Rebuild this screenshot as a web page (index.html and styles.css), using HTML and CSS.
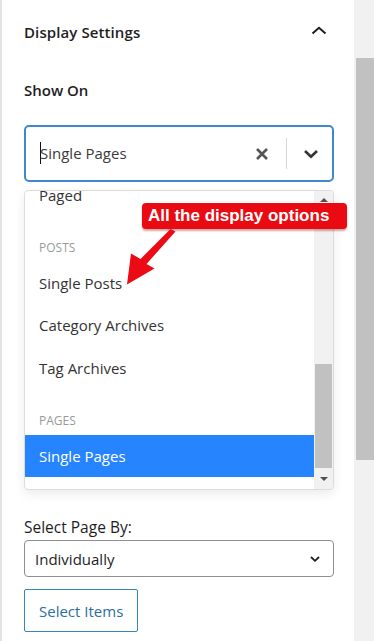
FILE: index.html
```html
<!DOCTYPE html>
<html lang="en">
<head>
<meta charset="utf-8">
<title>Display Settings</title>
<link rel="stylesheet" href="styles.css">
</head>
<body>
<div class="page">
  <div class="panel">
    <div class="panel-header">
      <span class="panel-title">Display Settings</span>
      <svg class="chev-up" width="16" height="9" viewBox="0 0 16 9"><path d="M1.5 7.5 L8 1.8 L14.5 7.5" fill="none" stroke="#1e1e1e" stroke-width="2"/></svg>
    </div>
    <div class="field-label">Show On</div>
    <div class="rs-control">
      <div class="rs-value"><span class="caret"></span>Single Pages</div>
      <div class="rs-indicators">
        <svg class="rs-clear" width="14" height="14" viewBox="0 0 14 14"><path d="M2 2 L12 12 M12 2 L2 12" stroke="#555" stroke-width="2.6" stroke-linecap="butt"/></svg>
        <span class="rs-sep"></span>
        <svg class="rs-drop" width="16" height="10" viewBox="0 0 16 10"><path d="M2 2 L8 7.6 L14 2" fill="none" stroke="#333" stroke-width="2.6"/></svg>
      </div>
    </div>
    <div class="rs-menu">
      <div class="rs-list">
        <div class="rs-scroll">
          <div class="rs-group">
            <div class="rs-option">Paged</div>
          </div>
          <div class="rs-group">
            <div class="rs-heading">Posts</div>
            <div class="rs-option">Single Posts</div>
            <div class="rs-option">Category Archives</div>
            <div class="rs-option">Tag Archives</div>
          </div>
          <div class="rs-group">
            <div class="rs-heading">Pages</div>
            <div class="rs-option selected">Single Pages</div>
          </div>
        </div>
      </div>
      <div class="mini-scrollbar">
        <span class="arrow-up"></span>
        <div class="mini-track"><div class="mini-thumb"></div></div>
        <span class="arrow-down"></span>
      </div>
    </div>
    <div class="field-label plain">Select Page By:</div>
    <div class="select-box">
      <span>Individually</span>
      <svg width="12" height="8" viewBox="0 0 12 8"><path d="M2 2 L6 5.8 L10 2" fill="none" stroke="#1e1e1e" stroke-width="1.8"/></svg>
    </div>
    <button class="btn-outline">Select Items</button>
  </div>
  <div class="page-scrollbar"><div class="page-thumb"></div></div>

  <div class="callout">All the display options</div>
  <svg class="callout-arrow" width="60" height="70" viewBox="120 225 60 70">
    <polygon points="170.5,229 175.5,231.5 146.5,264 154.5,268.5 127,284.5 131,253.5 140.5,259" fill="#ec0a14"/>
  </svg>
</div>
</body>
</html>
```
FILE: styles.css
```css
* { box-sizing: border-box; }
html, body { margin: 0; padding: 0; }
body {
  font-family: "Open Sans", "Noto Sans", sans-serif;
  color: #1e1e1e;
  background: #fff;
}
.page {
  position: relative;
  display: flex;
  width: 374px;
  height: 641px;
  overflow: hidden;
}
.panel {
  flex: 1;
  border-left: 2px solid #e4e4e4;
  padding: 0 20px 0 22px;
  background: #fff;
}
.panel-header {
  height: 64px;
  display: flex;
  align-items: center;
  justify-content: space-between;
  padding-right: 7px;
}
.panel-title {
  font-size: 15px;
  font-weight: 600;
  letter-spacing: 0.1px;
}
.chev-up { margin-top: -3px; }
.field-label {
  font-size: 15px;
  font-weight: 600;
  line-height: 20px;
  margin-top: 16px;
}
.field-label.plain {
  font-weight: 400;
  font-size: 15.5px;
  margin-top: 27px;
}
.rs-control {
  margin-top: 25px;
  height: 57px;
  border: 2px solid #3e88cf;
  border-radius: 5px;
  display: flex;
  align-items: center;
  justify-content: space-between;
}
.rs-value {
  position: relative;
  padding-left: 14px;
  font-size: 15px;
  color: #3b3b3b;
}
.caret {
  display: inline-block;
  width: 1px;
  height: 22px;
  background: #111;
  vertical-align: middle;
  margin-right: -1px;
  margin-top: -3px;
}
.rs-indicators {
  display: flex;
  align-items: center;
  height: 100%;
}
.rs-clear { margin-right: 17px; }
.rs-sep {
  width: 1px;
  height: 31px;
  background: #d6d6d6;
  margin-right: 16px;
}
.rs-drop { margin-right: 13px; }

.rs-menu {
  margin-top: 8px;
  height: 300px;
  border: 1px solid #dcdcdc;
  border-radius: 4px;
  box-shadow: 0 4px 11px rgba(0,0,0,0.08);
  display: flex;
  overflow: hidden;
  background: #fff;
}
.rs-list {
  flex: 1;
  overflow: hidden;
}
.rs-scroll { margin-top: -17.5px; padding-bottom: 4px; }
.rs-group { padding: 8px 0; }
.rs-group:first-child { padding-top: 0; }
.rs-heading {
  padding: 7px 14px 0;
  line-height: 17px;
  margin-bottom: 5.5px;
  font-size: 12px;
  color: #999;
  text-transform: uppercase;
}
.rs-option {
  height: 42.5px;
  display: flex;
  align-items: center;
  padding-left: 14px;
  font-size: 15px;
  color: #333;
}
.rs-option.selected {
  background: #2684ff;
  color: #fff;
}
.mini-scrollbar {
  width: 19px;
  background: #f1f1f1;
  display: flex;
  flex-direction: column;
  align-items: center;
}
.arrow-up, .arrow-down {
  width: 0; height: 0;
  border-left: 4px solid transparent;
  border-right: 4px solid transparent;
  flex: 0 0 auto;
}
.arrow-up { border-bottom: 4px solid #505050; margin: 7px 0 6px; }
.arrow-down { border-top: 4px solid #505050; margin: 6px 0 8px; }
.mini-track {
  flex: 1;
  width: 100%;
  display: flex;
  flex-direction: column;
  justify-content: flex-end;
  padding: 0 1px 3px;
}
.mini-thumb {
  height: 104px;
  background: #c1c1c1;
}

.select-box {
  margin-top: 3px;
  height: 37px;
  border: 1px solid #8c8f94;
  border-radius: 4px;
  display: flex;
  align-items: center;
  justify-content: space-between;
  padding: 0 12px 0 10px;
  font-size: 15px;
}
.btn-outline {
  margin-top: 12px;
  height: 43px;
  padding: 0 14px;
  background: #fff;
  border: 1px solid #3388b8;
  border-radius: 2px;
  color: #2a6e9d;
  font-family: inherit;
  font-size: 15px;
}
.page-scrollbar {
  width: 20px;
  background: #f1f1f1;
  padding-top: 58px;
  padding-left: 2px;
}
.page-thumb {
  height: 402px;
  background: #c1c1c1;
}

.callout {
  position: absolute;
  left: 142px;
  top: 203px;
  width: 205px;
  height: 26px;
  background: #ea0a12;
  border-radius: 4px;
  box-shadow: 0 2px 2px rgba(120,0,0,0.35);
  color: #fff;
  font-family: "Liberation Sans", Arial, sans-serif;
  font-weight: 700;
  font-size: 17px;
  line-height: 26px;
  padding-left: 6px;
  white-space: nowrap;
}
.callout-arrow {
  position: absolute;
  left: 120px;
  top: 225px;
}
```
